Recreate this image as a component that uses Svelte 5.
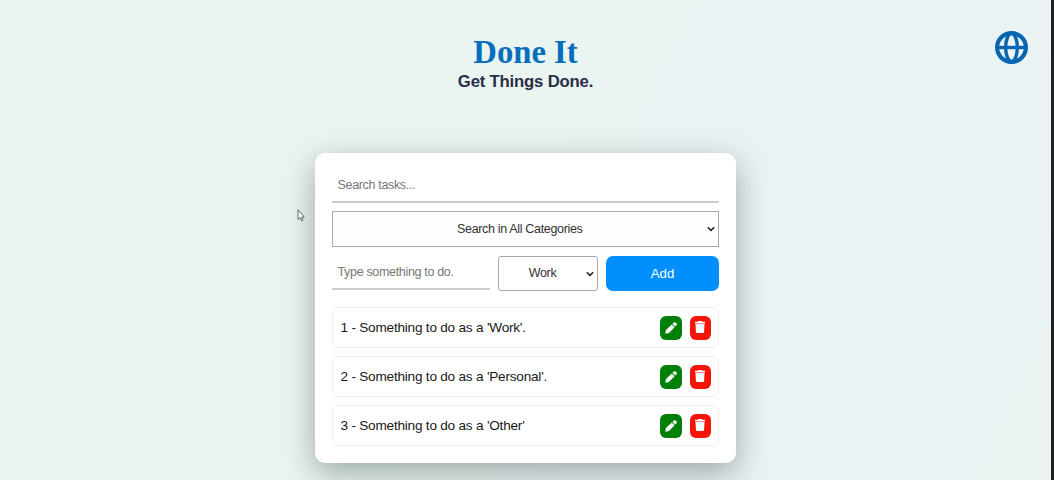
<script>
  const tasks = [
    "1 - Something to do as a 'Work'.",
    "2 - Something to do as a 'Personal'.",
    "3 - Something to do as a 'Other'"
  ];
</script>

{#snippet chevron()}
  <svg class="chevron" viewBox="0 0 8 6"><path d="M.8 1.2 4 4.4 7.2 1.2" /></svg>
{/snippet}

<div class="page">
  <header>
    <h1>Done It</h1>
    <p>Get Things Done.</p>
  </header>

  <button class="language" aria-label="Language">
    <svg viewBox="0 0 34 34">
      <circle cx="17" cy="17" r="14.8" />
      <ellipse cx="17" cy="17" rx="6" ry="14.6" />
      <path d="M2.5 17h29" />
    </svg>
  </button>

  <main>
    <div class="field search">Search tasks...</div>
    <div class="select wide"><span>Search in All Categories</span>{@render chevron()}</div>
    <div class="entry">
      <div class="field">Type something to do.</div>
      <div class="select small"><span>Work</span>{@render chevron()}</div>
      <button class="add">Add</button>
    </div>
    <ul>
      {#each tasks as task}
        <li>
          <span>{task}</span>
          <button class="edit" aria-label="Edit">
            <svg viewBox="0 0 12 12"><path d="M.3 11.7.7 8.7Q.8 8.1 1.2 7.7L6.8 2.4 9.6 5.2 4.2 10.7Q3.8 11.1 3.2 11.2ZM7.4 1.8 8.9.5Q9.8-.2 10.6.5L11.6 1.5Q12.2 2.3 11.6 3.1L10.2 4.6Z" /></svg>
          </button>
          <button class="delete" aria-label="Delete">
            <svg viewBox="0 0 12 12"><path d="M1 .8h2.7L4.4 0h3.2L8.3.8H11v1.7H1ZM1.5 3h9l-.4 7.7q-.1 1.2-1.2 1.2H3.1q-1.1 0-1.2-1.2Z" /></svg>
          </button>
        </li>
      {/each}
    </ul>
  </main>

  <svg class="cursor" viewBox="0 0 8 13"><path d="M1 .8v9.6l2.1-1.8 1.5 3.2 1.4-.7-1.4-3h2.6Z" /></svg>
</div>

<style>
  :global(body) { overflow: hidden; }
  .page {
    position: relative;
    box-sizing: border-box;
    width: 1054px;
    height: 480px;
    padding-top: 33px;
    overflow: hidden;
    border-right: 3px solid #202020;
    background: linear-gradient(115deg, #eaf4f1 0%, #eaf4f1 48%, #ebf2f5 62%, #ebf2f5 75%, #eaf3f2 100%);
    font-family: "Liberation Sans", Arial, sans-serif;
  }
  header { height: 119.5px; text-align: center; }
  h1 {
    margin: 0;
    color: #056ebd;
    font: bold 32.7px/39px "Liberation Serif", "Times New Roman", serif;
  }
  p { margin: 0; color: #2b2d48; font-size: 16.7px; font-weight: bold; line-height: 20px; letter-spacing: -.18px; }
  button { padding: 0; border: 0; font-family: inherit; }
  .language {
    position: absolute;
    top: 31px;
    right: 23px;
    width: 33px;
    height: 33px;
    background: none;
  }
  .language svg { display: block; fill: none; stroke: #0765b2; stroke-width: 3.5; }
  .language circle { stroke-width: 4.3; }
  main {
    box-sizing: border-box;
    width: 421px;
    height: 310.5px;
    margin: 0 auto;
    padding: 15.5px 17px 15px 16.5px;
    border-radius: 10px;
    background: #fff;
    box-shadow: 0 10px 33px rgba(0, 20, 15, .34);
  }
  .field {
    box-sizing: border-box;
    height: 35px;
    padding-left: 6px;
    border-bottom: 2px solid #ccc;
    color: #777;
    font-size: 12.5px;
    letter-spacing: -.33px;
    line-height: 35px;
  }
  .select {
    display: flex;
    box-sizing: border-box;
    align-items: center;
    border: 1px solid #aaa;
    color: #333;
    font-size: 12.5px;
    letter-spacing: -.33px;
  }
  .select span { flex: 1; text-align: center; line-height: 14px; padding-bottom: 1px; }
  .chevron { width: 8px; height: 6px; fill: none; stroke: #222; stroke-width: 1.5; }
  .wide { height: 36px; margin-top: 8px; padding-right: 3px; background: #fefefe; }
  .entry { display: grid; grid-template-columns: 158.5px 100px 113px; gap: 8px; margin-top: 9px; }
  .entry .field { height: 34px; line-height: 32px; }
  .small { height: 35px; padding-right: 3px; border-radius: 3px; }
  .add { height: 34.5px; border-radius: 7px; background: #008ffc; color: #fff; font-size: 13.2px; }
  ul { display: grid; gap: 8.2px; margin: 16px 0 0; padding: 0; list-style: none; }
  li {
    display: flex;
    box-sizing: border-box;
    align-items: center;
    height: 41px;
    padding: 0 7.5px 0 8px;
    border: 1px solid #eee;
    border-radius: 7px;
    color: #191919;
    font-size: 13.6px;
    letter-spacing: -.22px;
  }
  li span { flex: 1; }
  li button { display: flex; align-items: center; justify-content: center; height: 24px; border-radius: 6px; }
  li svg { width: 12px; height: 12px; fill: #fff; }
  .edit { width: 22px; margin-right: 8px; background: #008008; }
  .delete { width: 21px; background: #f41408; }
  .delete svg { margin-bottom: 1px; }
  .cursor { position: absolute; top: 208.5px; left: 297px; width: 8px; height: 13px; fill: #fff; stroke: #555; stroke-width: .9; }
</style>
